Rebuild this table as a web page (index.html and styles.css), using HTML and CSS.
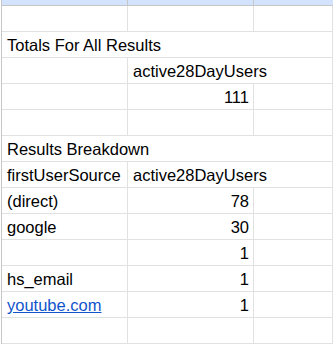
FILE: index.html
```html
<!DOCTYPE html>
<html>
<head>
<meta charset="utf-8">
<link rel="stylesheet" href="styles.css">
</head>
<body>
<div class="sheet">
  <div class="hd"></div><div class="hd"></div><div class="hd last"></div>

  <div class="c"></div><div class="c"></div><div class="c"></div>

  <div class="c span3">Totals For All Results</div>

  <div class="c"></div><div class="c span2">active28DayUsers</div>

  <div class="c"></div><div class="c num">111</div><div class="c"></div>

  <div class="c"></div><div class="c"></div><div class="c"></div>

  <div class="c span3">Results Breakdown</div>

  <div class="c">firstUserSource</div><div class="c span2">active28DayUsers</div>

  <div class="c">(direct)</div><div class="c num">78</div><div class="c"></div>

  <div class="c">google</div><div class="c num">30</div><div class="c"></div>

  <div class="c"></div><div class="c num">1</div><div class="c"></div>

  <div class="c">hs_email</div><div class="c num">1</div><div class="c"></div>

  <div class="c"><a class="link" href="#">youtube.com</a></div><div class="c num">1</div><div class="c"></div>

  <div class="c"></div><div class="c"></div><div class="c"></div>
</div>
</body>
</html>
```

FILE: styles.css
```css
html, body {
  margin: 0;
  padding: 0;
  background: #ffffff;
  overflow: hidden;
}

.sheet {
  margin-left: 1px;
  border-left: 1px solid #c4c7c5;
  display: grid;
  grid-template-columns: 126px 126px 1fr;
  grid-template-rows: 6px;
  grid-auto-rows: 26px;
  font-family: "Liberation Sans", Arial, sans-serif;
  font-size: 16.5px;
  color: #000000;
}

.hd {
  background: #d3e3fd;
  border-right: 1px solid #c4c7c5;
  border-bottom: 1px solid #c4c7c5;
}

.hd.last {
  border-right: none;
}

.c {
  border-right: 1px solid #e1e1e1;
  border-bottom: 1px solid #e1e1e1;
  padding: 4px 4px 0 5px;
  line-height: 19px;
  white-space: nowrap;
  overflow: hidden;
}

.span2 {
  grid-column: span 2;
}

.span3 {
  grid-column: span 3;
}

.num {
  text-align: right;
}

.link {
  color: #1155cc;
  text-decoration: underline;
}
```
